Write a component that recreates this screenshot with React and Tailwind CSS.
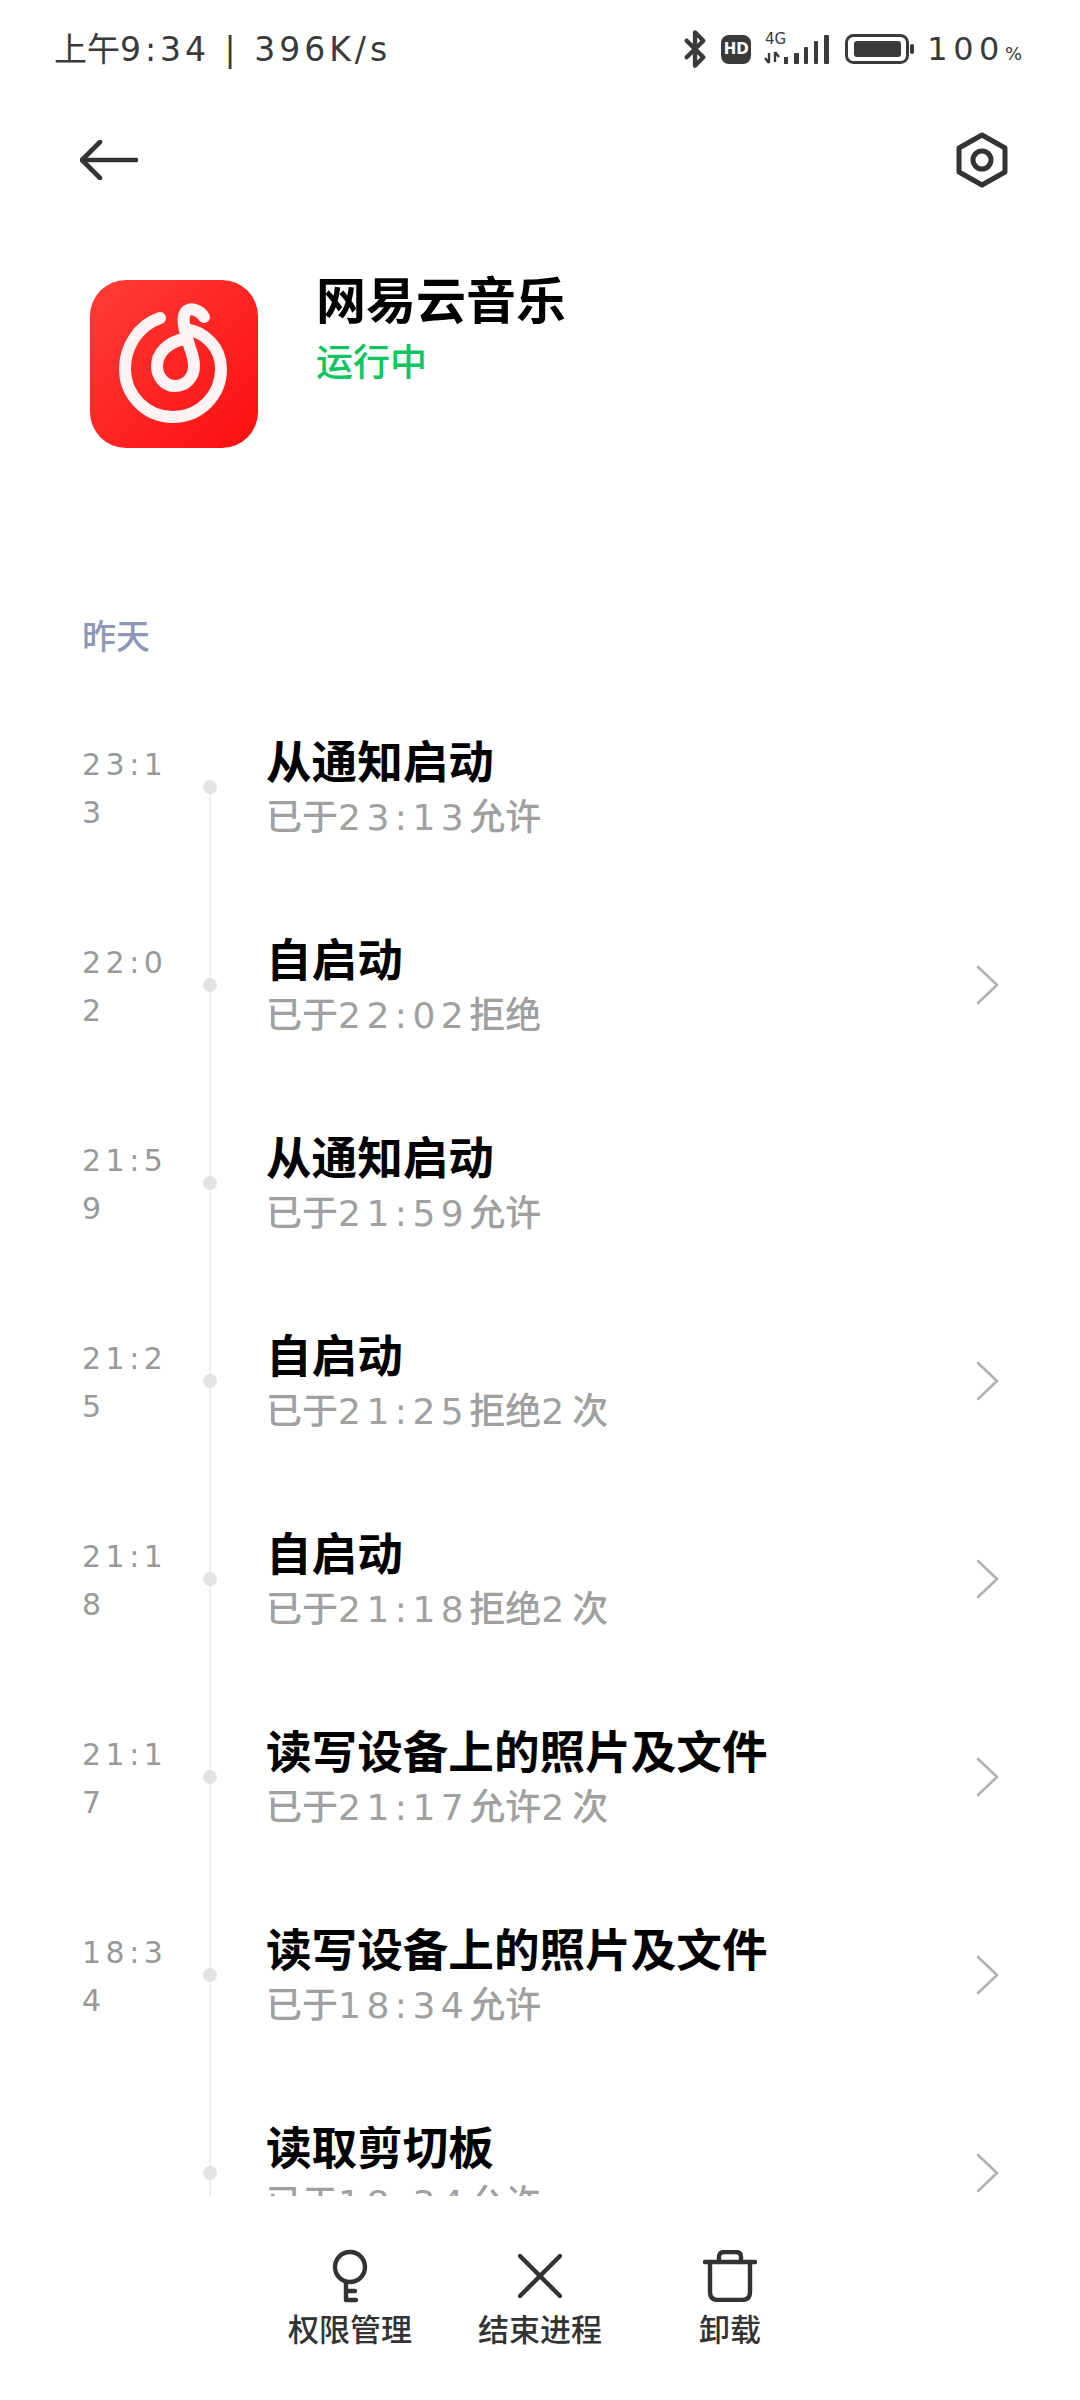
import React from "react";
import { Bluetooth } from "lucide-react";

const rows = [
  { t: ["23:1", "3"], title: "从通知启动", pre: "已于", time: "23:13", post: "允许", chev: false },
  { t: ["22:0", "2"], title: "自启动", pre: "已于", time: "22:02", post: "拒绝", chev: true },
  { t: ["21:5", "9"], title: "从通知启动", pre: "已于", time: "21:59", post: "允许", chev: false },
  { t: ["21:2", "5"], title: "自启动", pre: "已于", time: "21:25", post: "拒绝", count: true, chev: true },
  { t: ["21:1", "8"], title: "自启动", pre: "已于", time: "21:18", post: "拒绝", count: true, chev: true },
  { t: ["21:1", "7"], title: "读写设备上的照片及文件", pre: "已于", time: "21:17", post: "允许", count: true, chev: true },
  { t: ["18:3", "4"], title: "读写设备上的照片及文件", pre: "已于", time: "18:34", post: "允许", chev: true },
  { t: [], title: "读取剪切板", pre: "已于", time: "18:34", post: "允许", chev: true },
];

function Chevron() {
  return (
    <svg width="24" height="40" viewBox="0 0 24 40" fill="none" stroke="#b2b2b2" strokeWidth="2.6" strokeLinecap="round" strokeLinejoin="round">
      <path d="M2 2 L21 20 L2 38" />
    </svg>
  );
}

function Row({ r, first }) {
  return (
    <div className="flex h-[198px] shrink-0 items-center pl-[82px] pr-[80px]">
      <div className="w-[110px] shrink-0 pt-[3px] text-[30px] leading-[48px] tracking-[4.5px] text-[#999999]">
        {r.t.map((s) => (
          <div key={s}>{s}</div>
        ))}
      </div>
      <div className="flex h-full w-[36px] shrink-0 flex-col items-center">
        <div className={first ? "w-[2px] flex-1" : "w-[2px] flex-1 bg-[#eeeeee]"} />
        <div className="h-[14px] w-[14px] shrink-0 rounded-full bg-[#e3e3e3]" />
        <div className="w-[2px] flex-1 bg-[#eeeeee]" />
      </div>
      <div className="ml-[38px] min-w-0 flex-1 pt-[5px]">
        <div className="text-[45.6px] font-bold leading-[56px] text-black">{r.title}</div>
        <div className="mt-[1px] text-[36px] font-medium leading-[50px] text-[#a0a0a0]">
          {r.pre}
          <span className="tracking-[5.5px]">{r.time}</span>
          {r.post}
          {r.count && (
            <>
              <span className="tracking-[8px]">2</span>次
            </>
          )}
        </div>
      </div>
      {r.chev && <Chevron />}
    </div>
  );
}

function Signal() {
  return (
    <svg width="68" height="36" viewBox="0 0 68 36" fill="#3a3a3a">
      <text x="1" y="13" fontSize="15" fontFamily="DejaVu Sans" fill="#3a3a3a">4G</text>
      <path d="M5 22 v10 M1 27 l4 5 M11 21 v10 M15 26 l-4 -5" stroke="#3a3a3a" strokeWidth="2.4" fill="none" />
      <rect x="20" y="26" width="4" height="7" />
      <rect x="30" y="22" width="5" height="11" rx="1" />
      <rect x="40" y="16" width="4" height="17" rx="1" />
      <rect x="50" y="10" width="4" height="23" rx="1" />
      <rect x="60" y="4" width="5" height="29" rx="1" />
    </svg>
  );
}

function Battery() {
  return (
    <svg width="70" height="30" viewBox="0 0 70 30">
      <rect x="1.5" y="1.5" width="61" height="27" rx="7" fill="none" stroke="#3a3a3a" strokeWidth="3" />
      <rect x="9" y="7" width="47" height="16" rx="3" fill="#3a3a3a" />
      <rect x="65" y="10" width="4" height="10" rx="2" fill="#3a3a3a" />
    </svg>
  );
}

function Logo() {
  return (
    <svg width="168" height="168" viewBox="0 0 168 168" fill="none" className="shrink-0">
      <defs>
        <linearGradient id="lg" x1="0" y1="0" x2="1" y2="1">
          <stop offset="0" stopColor="#ff3c38" />
          <stop offset="1" stopColor="#fc0f0f" />
        </linearGradient>
      </defs>
      <rect width="168" height="168" rx="36" fill="url(#lg)" />
      <g stroke="#fdf3f2" strokeWidth="12" strokeLinecap="round" strokeLinejoin="round">
        <path d="M70 38 C 47 46, 35 68, 35 89 A 48 48 0 0 0 131 89 C 131 68, 116 52, 95 49" />
        <path d="M114 37 C 110 30, 99 26, 95 33 C 91 40, 96 55, 100 68 C 103 76, 104 80, 104 86 C 104 97, 96 106, 85 106 C 75 106, 67 97, 67 86 C 67 73, 78 62, 94 59" />
      </g>
    </svg>
  );
}

function Action({ icon, label }) {
  return (
    <div className="flex w-[190px] flex-col items-center">
      <div className="flex h-[54px] items-center justify-center">{icon}</div>
      <div className="mt-[5px] text-[31px] font-medium leading-[44px] text-[#333333]">{label}</div>
    </div>
  );
}

export default function App() {
  return (
    <div className="flex h-[2400px] w-[1080px] flex-col overflow-hidden bg-white font-['DejaVu_Sans','Noto_Sans_CJK_SC',sans-serif]">
      {/* status bar */}
      <div className="flex h-[98px] shrink-0 items-center justify-between pl-[54px] pr-[58px] text-[#3a3a3a]">
        <div className="text-[33px] leading-none">
          上午<span className="tracking-[4px]">9:34 | 396K/s</span>
        </div>
        <div className="flex items-center">
          <Bluetooth size={40} strokeWidth={2.6} color="#3a3a3a" />
          <div className="ml-[6px] flex h-[29px] w-[30px] items-center justify-center rounded-[8px] bg-[#3a3a3a] text-[15px] font-bold leading-none text-white">
            HD
          </div>
          <div className="ml-[13px]"><Signal /></div>
          <div className="ml-[13px]"><Battery /></div>
          <div className="ml-[12px] text-[32px] leading-none tracking-[5.5px]">
            100<span className="text-[18px] tracking-normal">%</span>
          </div>
        </div>
      </div>

      {/* nav */}
      <div className="flex h-[124px] shrink-0 items-center justify-between pl-[80px] pr-[72px]">
        <svg width="58" height="40" viewBox="0 0 58 40" fill="none" stroke="#333333" strokeWidth="4.6" strokeLinecap="round" strokeLinejoin="round">
          <path d="M2 20 H56" />
          <path d="M20 2 L2 20 L20 38" />
        </svg>
        <svg width="52" height="56" viewBox="0 0 52 56" fill="none" stroke="#333333" strokeWidth="5" strokeLinejoin="round">
          <path d="M26 3 L49 16 V40 L26 53 L3 40 V16 Z" />
          <circle cx="26" cy="28" r="9" />
        </svg>
      </div>

      {/* app */}
      <div className="flex shrink-0 pl-[90px] pt-[58px]">
        <Logo />
        <div className="ml-[58px]">
          <div className="mt-[-8px] text-[50px] font-bold leading-[60px] text-black">网易云音乐</div>
          <div className="mt-[7px] text-[37px] font-medium leading-[50px] text-[#10c45f]">运行中</div>
        </div>
      </div>

      <div className="mt-[163px] shrink-0 pl-[82px] text-[34px] font-medium leading-[52px] text-[#8f97b8]">昨天</div>

      {/* timeline */}
      <div className="mt-[25px] flex min-h-0 flex-1 flex-col overflow-hidden">
        {rows.map((r, i) => (
          <Row key={i} r={r} first={i === 0} />
        ))}
      </div>

      {/* bottom actions */}
      <div className="flex h-[204px] shrink-0 justify-center bg-white pt-[53px]">
        <Action
          label="权限管理"
          icon={
            <svg width="36" height="54" viewBox="0 0 36 54" fill="none" stroke="#333333" strokeWidth="4.4" strokeLinecap="round" strokeLinejoin="round">
              <circle cx="18" cy="18" r="15" />
              <path d="M14 33 V51 H24 M14 42 H23" />
            </svg>
          }
        />
        <Action
          label="结束进程"
          icon={
            <svg width="44" height="44" viewBox="0 0 44 44" fill="none" stroke="#333333" strokeWidth="4.4" strokeLinecap="round">
              <path d="M2 2 L42 42 M42 2 L2 42" />
            </svg>
          }
        />
        <Action
          label="卸载"
          icon={
            <svg width="54" height="52" viewBox="0 0 54 52" fill="none" stroke="#333333" strokeWidth="4.4" strokeLinecap="round" strokeLinejoin="round">
              <path d="M2 12 H52" />
              <path d="M16 12 V7 Q16 2 21 2 H33 Q38 2 38 7 V12" />
              <path d="M7 12 V42 Q7 50 15 50 H39 Q47 50 47 42 V12" />
            </svg>
          }
        />
      </div>
    </div>
  );
}
